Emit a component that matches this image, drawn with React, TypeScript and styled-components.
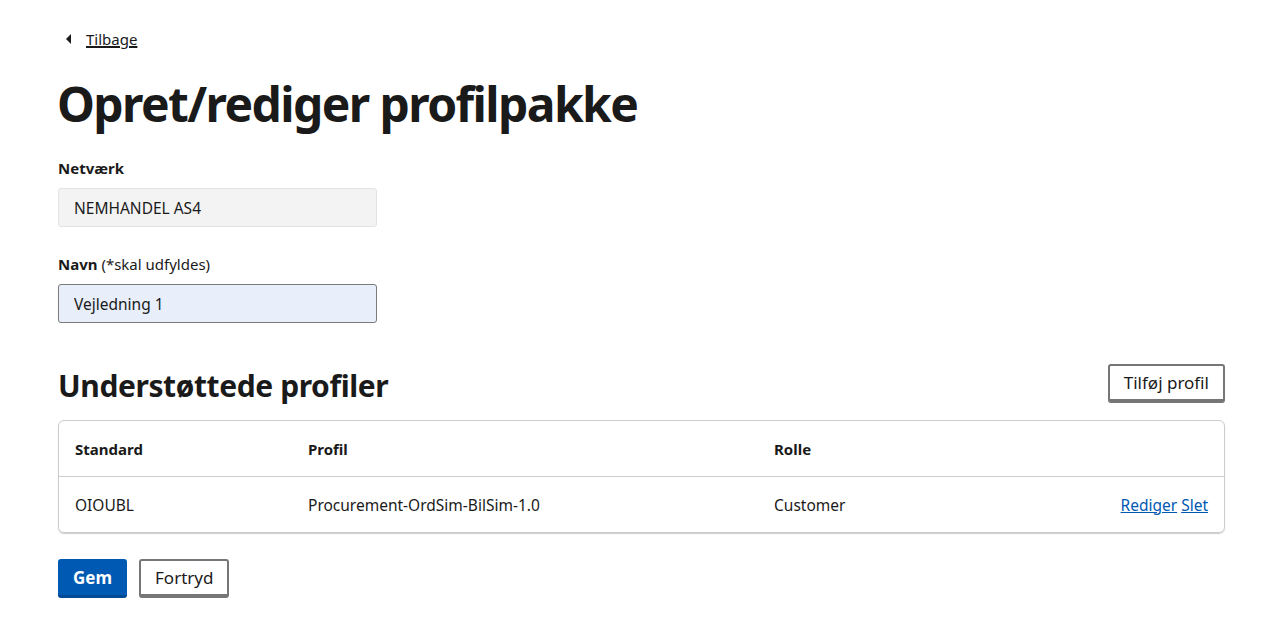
import React from "react";
import styled, { createGlobalStyle } from "styled-components";

const GlobalStyle = createGlobalStyle`
  html, body {
    margin: 0;
    padding: 0;
    background: #ffffff;
  }
  body {
    font-family: "Noto Sans", "Open Sans", sans-serif;
    color: #1a1a1a;
  }
  * {
    box-sizing: border-box;
  }
`;

const profiles = [
  {
    standard: "OIOUBL",
    profil: "Procurement-OrdSim-BilSim-1.0",
    rolle: "Customer",
  },
];

const App = () => {
  return (
    <>
      <GlobalStyle />
      <Page>
        <BackLink href="#">
          <Caret>
            <svg width="6" height="10" viewBox="0 0 6 10">
              <path d="M5 0 L0 5 L5 10 Z" fill="#1a1a1a" />
            </svg>
          </Caret>
          <span>Tilbage</span>
        </BackLink>
        <Title>Opret/rediger profilpakke</Title>

        <Field>
          <Label>Netværk</Label>
          <ReadOnlyBox>NEMHANDEL AS4</ReadOnlyBox>
        </Field>

        <Field>
          <Label>
            Navn <Hint>(*skal udfyldes)</Hint>
          </Label>
          <Input defaultValue="Vejledning 1" />
        </Field>

        <SectionHeader>
          <SubTitle>Understøttede profiler</SubTitle>
          <SecondaryButton>Tilføj profil</SecondaryButton>
        </SectionHeader>

        <Table>
          <HeadRow>
            <HeadCell>Standard</HeadCell>
            <HeadCell>Profil</HeadCell>
            <HeadCell>Rolle</HeadCell>
            <HeadCell />
          </HeadRow>
          {profiles.map((p, i) => (
            <BodyRow key={i}>
              <Cell>{p.standard}</Cell>
              <Cell>{p.profil}</Cell>
              <Cell>{p.rolle}</Cell>
              <ActionCell>
                <TableLink href="#">Rediger</TableLink>
                <TableLink href="#">Slet</TableLink>
              </ActionCell>
            </BodyRow>
          ))}
        </Table>

        <Actions>
          <PrimaryButton>Gem</PrimaryButton>
          <SecondaryButton>Fortryd</SecondaryButton>
        </Actions>
      </Page>
    </>
  );
};

export default App;

const Page = styled.div`
  padding: 27px 42px 24px 58px;
`;

const BackLink = styled.a`
  display: inline-flex;
  align-items: center;
  gap: 14px;
  font-size: 15px;
  color: #1a1a1a;
  padding-left: 8px;
  span {
    text-decoration: underline;
    text-underline-offset: 2px;
  }
`;

const Caret = styled.span`
  display: flex;
  width: 6px;
  height: 10px;
`;

const Title = styled.h1`
  margin: 25px 0 23px -1px;
  font-size: 48px;
  line-height: 60px;
  font-weight: 700;
  letter-spacing: -1.6px;
`;

const Field = styled.div`
  margin-bottom: 26px;
`;

const Label = styled.div`
  font-size: 15px;
  font-weight: 700;
  line-height: 22px;
  margin-bottom: 9px;
`;

const Hint = styled.span`
  font-weight: 400;
`;

const ReadOnlyBox = styled.div`
  width: 319px;
  height: 39px;
  display: flex;
  align-items: center;
  padding: 0 15px;
  font-size: 15.5px;
  background: #f3f3f3;
  border: 1px solid #e3e3e3;
  border-radius: 3px;
`;

const Input = styled.input`
  width: 319px;
  height: 39px;
  padding: 0 15px;
  font-family: inherit;
  font-size: 15.5px;
  color: #1a1a1a;
  background: #e8effb;
  border: 1px solid #7a7a7a;
  border-radius: 3px;
  outline: none;
`;

const SectionHeader = styled.div`
  display: flex;
  align-items: flex-start;
  justify-content: space-between;
  margin-top: 41px;
  margin-bottom: 14px;
`;

const SubTitle = styled.h2`
  margin: 2px 0 0;
  font-size: 30px;
  font-weight: 700;
  line-height: 40px;
  letter-spacing: -0.4px;
`;

const SecondaryButton = styled.button`
  height: 39px;
  padding: 0 14px;
  font-family: inherit;
  font-size: 17px;
  color: #1a1a1a;
  background: #ffffff;
  border: 2px solid #767676;
  border-bottom-width: 4px;
  border-radius: 3px;
  cursor: pointer;
`;

const PrimaryButton = styled.button`
  height: 39px;
  padding: 0 15px;
  font-family: inherit;
  font-size: 17px;
  font-weight: 700;
  color: #ffffff;
  background: #0059b3;
  border: none;
  border-bottom: 3px solid #004993;
  border-radius: 3px;
  cursor: pointer;
`;

const Table = styled.div`
  border: 1px solid #cccccc;
  border-radius: 6px;
  box-shadow: 0 1px 1px rgba(0, 0, 0, 0.2);
  margin-bottom: 26px;
`;

const rowGrid = `
  display: grid;
  grid-template-columns: 20% 40% 1fr auto;
  align-items: center;
`;

const HeadRow = styled.div`
  ${rowGrid}
  height: 56px;
  border-bottom: 1px solid #cccccc;
`;

const BodyRow = styled.div`
  ${rowGrid}
  height: 55px;
`;

const HeadCell = styled.div`
  padding: 0 16px;
  font-size: 15px;
  font-weight: 700;
`;

const Cell = styled.div`
  padding: 0 16px;
  font-size: 15.5px;
`;

const ActionCell = styled.div`
  padding: 0 16px;
  display: flex;
  gap: 4px;
  font-size: 15.5px;
`;

const TableLink = styled.a`
  color: #0059b3;
  text-decoration: underline;
`;

const Actions = styled.div`
  display: flex;
  gap: 12px;
`;
